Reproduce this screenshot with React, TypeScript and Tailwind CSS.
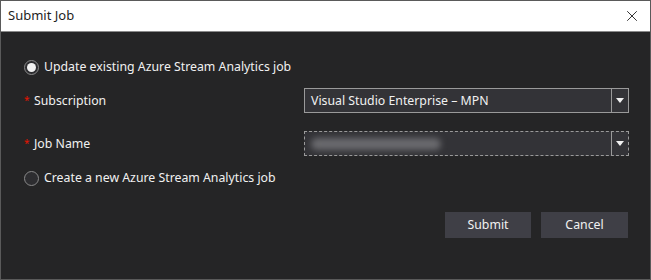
import { X } from "lucide-react";

function Caret() {
  return (
    <svg width="8" height="5" viewBox="0 0 8 5" className="fill-[#f1f1f1]">
      <path d="M0 0h8L4 5z" />
    </svg>
  );
}

function Radio({ checked, label }: { checked?: boolean; label: string }) {
  return (
    <div className="flex items-center gap-[5px]">
      <span className="flex size-[15px] items-center justify-center rounded-full border border-[#8a8a8a] bg-[#2d2d30]">
        {checked && <span className="size-[9px] rounded-full bg-[#f1f1f1]" />}
      </span>
      <span className="text-[12.3px] text-[#f1f1f1]">{label}</span>
    </div>
  );
}

function Field({
  label,
  focused,
  children,
}: {
  label: string;
  focused?: boolean;
  children: React.ReactNode;
}) {
  return (
    <div className="flex items-center">
      <div className="flex w-[280px] items-center gap-[4px] text-[12.3px] text-[#f1f1f1]">
        <span className="w-[6px] text-[10px] text-[#e51400]">*</span>
        <span>{label}</span>
      </div>
      <div
        className={`flex h-[25px] w-[325px] border ${
          focused ? "border-dashed border-[#9a9a9a]" : "border-[#9a9a9a]"
        } bg-[#333337]`}
      >
        <div className="relative flex flex-1 items-center overflow-hidden px-[6px] text-[12.3px] text-[#f1f1f1]">
          {children}
        </div>
        <div className="flex w-[17px] items-center justify-center border-l border-[#9a9a9a]">
          <Caret />
        </div>
      </div>
    </div>
  );
}

export default function App() {
  return (
    <div
      className="flex h-[280px] w-[651px] flex-col border border-[#5a5a5a] bg-[#252526]"
      style={{ fontFamily: '"Noto Sans", "Open Sans", sans-serif' }}
    >
      <div className="flex h-[31px] items-center justify-between border-b border-[#8a8a8a] bg-white pl-[7px] pr-[9px]">
        <span className="text-[13px] text-[#1e1e1e]">Submit Job</span>
        <X size={18} strokeWidth={1.2} className="text-[#1e1e1e]" />
      </div>
      <div className="flex flex-1 flex-col pl-[23px] pt-[26px]">
        <Radio checked label="Update existing Azure Stream Analytics job" />
        <div className="mt-[12px] flex flex-col gap-[18px]">
          <Field label="Subscription">Visual Studio Enterprise – MPN</Field>
          <Field label="Job Name" focused>
            <span className="h-[12px] w-[130px] rounded-full bg-[#6a6a6e] blur-[3px]" />
          </Field>
        </div>
        <div className="mt-[13px]">
          <Radio label="Create a new Azure Stream Analytics job" />
        </div>
        <div className="mt-[24px] flex justify-end gap-[10px] pr-[22px]">
          <button className="h-[26px] w-[86px] bg-[#3f3f46] text-[12.3px] text-[#f1f1f1]">
            Submit
          </button>
          <button className="h-[26px] w-[87px] bg-[#3f3f46] text-[12.3px] text-[#f1f1f1]">
            Cancel
          </button>
        </div>
      </div>
    </div>
  );
}
